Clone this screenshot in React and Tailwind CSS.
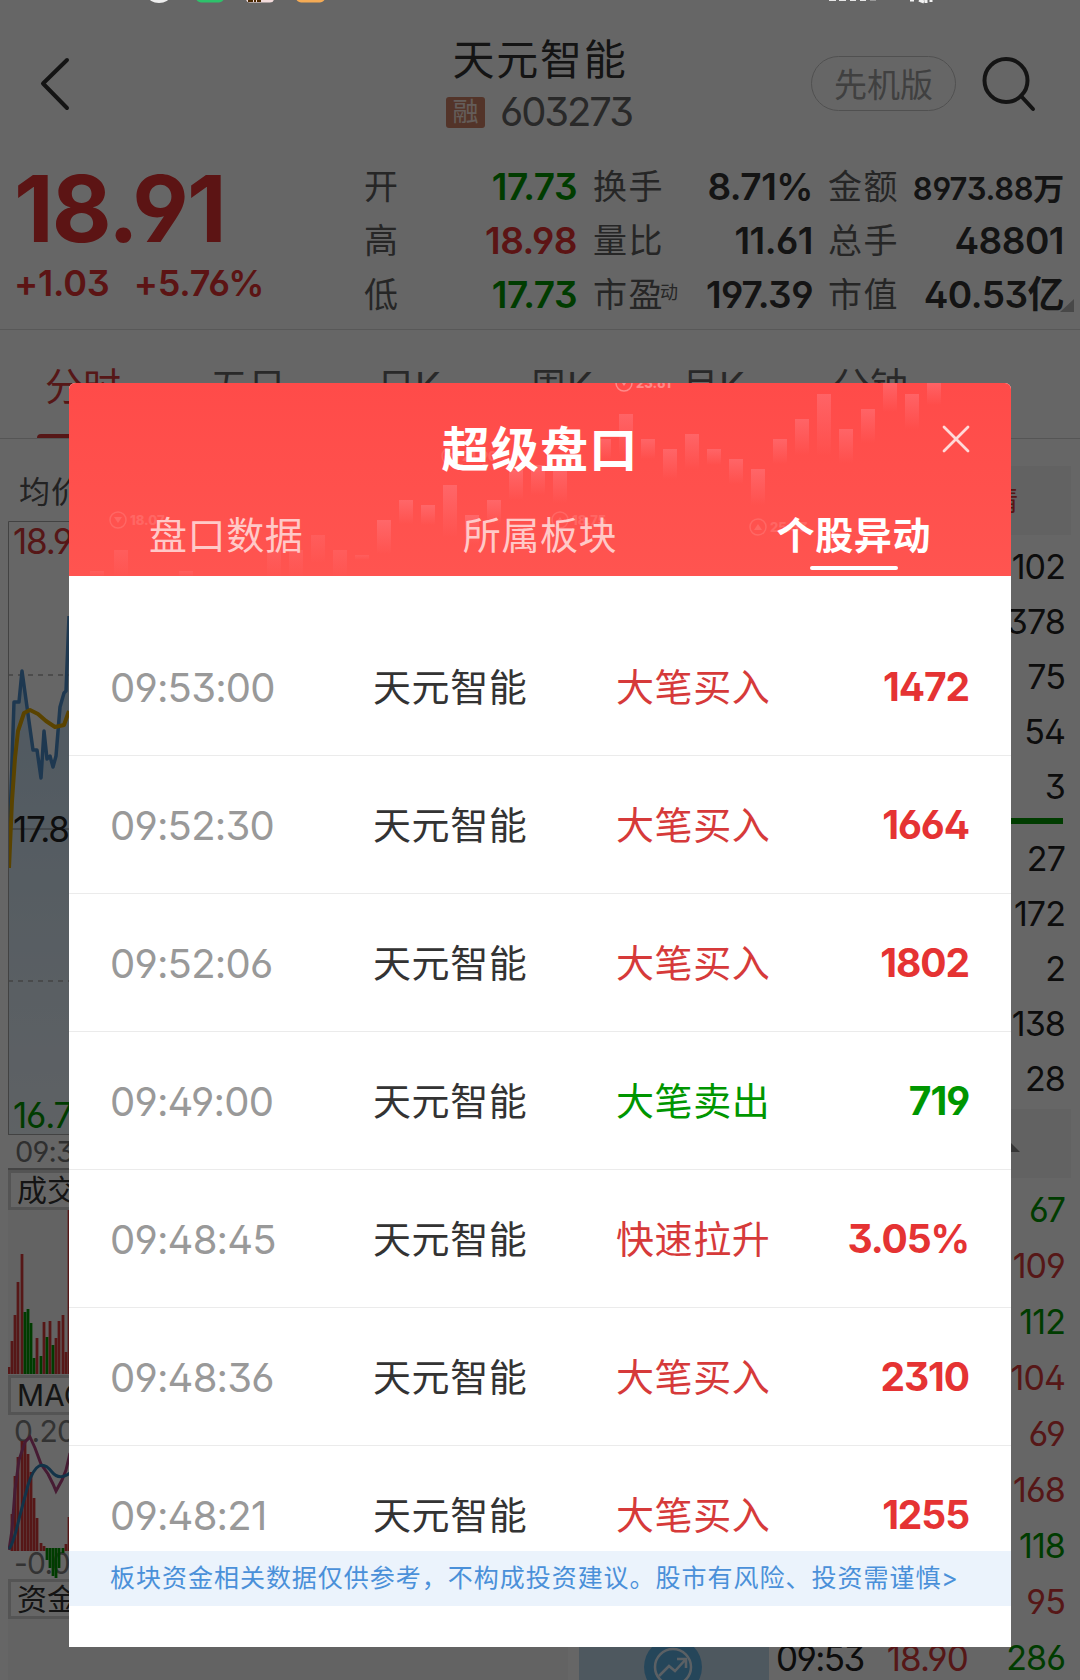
import React from 'react';

const RED = 'text-[#e53333]';
const GREEN = 'text-[#009600]';
const DARK = 'text-[#333333]';

const STATS = [
    [
        { label: '开', value: '17.73', color: GREEN },
        { label: '高', value: '18.98', color: RED },
        { label: '低', value: '17.73', color: GREEN },
    ],
    [
        { label: '换手', value: '8.71%', color: DARK },
        { label: '量比', value: '11.61', color: DARK },
        { label: '市盈', sup: '动', value: '197.39', color: DARK },
    ],
    [
        { label: '金额', value: '8973.88万', color: DARK, small: true },
        { label: '总手', value: '48801', color: DARK },
        { label: '市值', value: '40.53亿', color: DARK },
    ],
];

const STAT_COLUMNS = ['w-[213px]', 'w-[220px] ml-[16px]', 'w-[236px] ml-[15px]'];

const PERIODS = [
    { name: '分时', width: 'w-[165px]', color: 'text-[#d63a3a]' },
    { name: '五日', width: 'w-[167px]', color: 'text-[#666666]' },
    { name: '日K', width: 'w-[152px]', color: 'text-[#666666]' },
    { name: '周K', width: 'w-[152px]', color: 'text-[#666666]' },
    { name: '月K', width: 'w-[151px]', color: 'text-[#666666]' },
    { name: '分钟', width: 'w-[100px]', color: 'text-[#666666]' },
];

const SELL_ORDERS = ['102', '378', '75', '54', '3'];
const BUY_ORDERS = ['27', '172', '2', '138', '28'];

const TICKS = [
    { volume: '67', color: GREEN },
    { volume: '109', color: 'text-[#d63a3a]' },
    { volume: '112', color: GREEN },
    { volume: '104', color: 'text-[#d63a3a]' },
    { volume: '69', color: 'text-[#d63a3a]' },
    { volume: '168', color: 'text-[#d63a3a]' },
    { volume: '118', color: GREEN },
    { volume: '95', color: 'text-[#d63a3a]' },
    { volume: '286', color: GREEN, time: '09:53', price: '18.90' },
];

const MOVES = [
    { time: '09:53:00', type: '大笔买入', value: '1472', up: true },
    { time: '09:52:30', type: '大笔买入', value: '1664', up: true },
    { time: '09:52:06', type: '大笔买入', value: '1802', up: true },
    { time: '09:49:00', type: '大笔卖出', value: '719', up: false },
    { time: '09:48:45', type: '快速拉升', value: '3.05%', up: true },
    { time: '09:48:36', type: '大笔买入', value: '2310', up: true },
    { time: '09:48:21', type: '大笔买入', value: '1255', up: true },
];

// x, top, up
const VOLUME_BARS = [
    [1, 157, 1], [4, 131, 1], [7, 105, 1], [10, 72, 1], [14, 44, 1], [17, 102, 0], [20, 99, 0],
    [23, 113, 0], [26, 148, 0], [29, 128, 1], [33, 146, 0], [36, 112, 1], [39, 127, 0], [42, 111, 1],
    [45, 135, 0], [48, 128, 1], [51, 111, 1], [55, 105, 1], [58, 142, 1], [61, 0, 1],
];

// x, top, bottom, up
const MACD_BARS = [
    [4, 99, 136, 1], [7, 61, 136, 1], [10, 42, 136, 1], [14, 26, 136, 1], [17, 26, 136, 1], [20, 39, 136, 1],
    [23, 57, 136, 1], [26, 83, 136, 1], [29, 103, 136, 1], [33, 128, 136, 1], [36, 131, 136, 1],
    [39, 133, 145, 0], [42, 133, 153, 0], [45, 133, 161, 0], [48, 133, 163, 0], [51, 133, 153, 0],
    [55, 133, 138, 0], [58, 129, 136, 1], [61, 102, 136, 1],
];

// candles of the modal banner: x, y, height
const CANDLES = [
    [21, 188, 6], [45, 167, 27], [110, 188, 6], [198, 167, 27], [220, 167, 27], [242, 152, 28], [264, 167, 27],
    [286, 172, 5], [308, 137, 34], [330, 117, 24], [352, 122, 20], [374, 102, 52], [396, 132, 30],
    [418, 117, 24], [440, 87, 30], [462, 82, 30], [484, 84, 36], [528, 56, 20], [550, 31, 42], [572, 56, 20],
    [594, 66, 30], [616, 51, 35], [638, 66, 16], [660, 76, 25], [682, 86, 36], [704, 56, 25],
    [726, 36, 36], [748, 11, 62], [770, 46, 34], [792, 26, 34], [814, 0, 29], [836, 11, 35], [858, 0, 22],
];

// x, y, label, points up
const MARKERS = [
    [49, 137, '18.07', false],
    [381, 73, '21.90', false],
    [555, 0, '23.61', false],
    [491, 137, '18.75', true],
    [689, 144, '25.33', true],
];

const StatusBar = () => (
    <svg className="absolute left-0 top-0" width="1080" height="4" viewBox="0 0 1080 4">
        <ellipse cx="159" cy="-4" rx="11" ry="7" fill="#eeeeee" />
        <rect x="196" y="-10" width="28" height="12.5" rx="5" fill="#2dc26b" />
        <rect x="246" y="-10" width="28" height="12.5" rx="4" fill="#f3dcdc" />
        <path d="M248 0h5v2h-5zM254 0h2v2h-2zM257 0h4v2h-4z" fill="#4a2800" />
        <rect x="296" y="-10" width="29" height="12.5" rx="5" fill="#f5ab55" />
        <path d="M829 0h7M839 0h7M850 0h6M860 0h6" stroke="#e6e6e6" strokeWidth="2" />
        <path d="M870 0h6" stroke="#999999" strokeWidth="2" />
        <path d="M910 0h4M919 0l5 2M926 0v3M931 0v2" stroke="#f2f2f2" strokeWidth="3" />
    </svg>
);

const Header = () => (
    <div className="flex h-[150px] items-start">
        <div className="w-[360px] pl-[38px] pt-[54px]">
            <svg width="36" height="60" viewBox="0 0 36 60" fill="none" stroke="#333333" strokeWidth="4" strokeLinecap="round" strokeLinejoin="round">
                <path d="M29 6 5 29.500 29 54" />
            </svg>
        </div>
        <div className="flex w-[360px] flex-col items-center pt-[32px]">
            <div className="text-[42px] leading-[56px] tracking-[1.700px] text-[#333333]">天元智能</div>
            <div className="-ml-[2px] flex items-center gap-[15px] leading-[48px]">
                <span className="h-[31px] w-[39px] rounded-[3px] bg-[#d08266] text-center text-[26px] leading-[30px] text-[#fbe9e0]">融</span>
                <span className="text-[40px] tracking-[-2.100px] text-[#666666]">603273</span>
            </div>
        </div>
        <div className="flex flex-1 items-start pl-[91px] pt-[56px]">
            <div className="h-[55px] w-[145px] rounded-full border-[1.500px] border-[#c8c8c8] text-center text-[33px] leading-[56px] text-[#a0a0a0]">先机版</div>
            <svg className="-mt-[3px] ml-[23px]" width="64" height="64" viewBox="0 0 64 64" fill="none" stroke="#333333" strokeWidth="4" strokeLinecap="round">
                <circle cx="27" cy="27.500" r="21.500" />
                <path d="M42 43 54 56" />
            </svg>
        </div>
    </div>
);

const Quote = () => (
    <div className="flex h-[180px] border-b border-[#dcdcdc]">
        <div className="w-[364px] pl-[14px] pt-[9px] font-semibold text-[#e53333]">
            <div className="text-[92px] font-bold leading-[100px] tracking-[-1.800px]">18.91</div>
            <div className="flex gap-[24px] text-[36px] leading-[48px] tracking-[-0.200px]">
                <span>+1.03</span>
                <span>+5.76%</span>
            </div>
        </div>
        {STATS.map((column, i) => (
            <div key={i} className={`flex flex-col pt-[10px] ${STAT_COLUMNS[i]}`}>
                {column.map(item => (
                    <div key={item.label} className="flex h-[54px] items-center justify-between leading-[54px]">
                        <span className="whitespace-nowrap text-[34px] tracking-[1.500px] text-[#606060]">
                            {item.label}
                            {item.sup && <span className="ml-[-4px] align-[8px] text-[18px] leading-none">{item.sup}</span>}
                        </span>
                        {item.small ? (
                            <span className={`pt-[3px] text-[31px] font-semibold tracking-[-0.300px] ${item.color}`}>{item.value}</span>
                        ) : (
                            <span className={`text-[37px] font-semibold tracking-[-0.500px] ${item.color}`}>{item.value}</span>
                        )}
                    </div>
                ))}
            </div>
        ))}
        <svg className="-ml-[4px] mt-[149px]" width="14" height="13" viewBox="0 0 14 13">
            <path d="M14 0V13H0Z" fill="#b5b5b5" />
        </svg>
    </div>
);

const Periods = () => (
    <div className="h-[109px] border-b border-[#d4d4d4] pl-[45px]">
        <div className="flex h-[104px] pt-[28px] text-[38px] leading-[56px]">
            {PERIODS.map(period => (
                <div key={period.name} className={`${period.width} ${period.color}`}>{period.name}</div>
            ))}
        </div>
        <div className="-ml-[8px] h-[4px] w-[90px] rounded-t-md bg-[#d63a3a]" />
    </div>
);

const SectionTitle = ({ children }) => (
    <div className="h-[40px] overflow-hidden whitespace-nowrap border-[3px] border-[#d2d2d2] pl-[6px] text-[30px] leading-[34px] text-[#333333]">
        {children}
    </div>
);

const TrendChart = () => (
    <svg width="560" height="614" viewBox="0 0 560 614" fill="none">
        <defs>
            <linearGradient id="trend" x1="0" y1="0" x2="0" y2="1">
                <stop offset="0" stopColor="#c2dcf0" />
                <stop offset="1" stopColor="#ecf4fb" />
            </linearGradient>
        </defs>
        <path d="M1 330 6 181h5l3-31 11 79h4l4 28 3-47 3 28 3-3 3 11 3-11 4-49 4-14 2-2 3-75V613H1Z" fill="url(#trend)" />
        <path d="M0 308H560" stroke="#a8b4bd" strokeWidth="2" />
        <path d="M0 154H560M0 460H560" stroke="#a8a8a8" strokeWidth="1.500" strokeDasharray="5 5" />
        <path d="M1 330 6 181h5l3-31 11 79h4l4 28 3-47 3 28 3-3 3 11 3-11 4-49 4-14 2-2 3-75" stroke="#4b8cc9" strokeWidth="3.500" strokeLinejoin="round" />
        <path d="M1 347 4 280 7 237 10 210 16 192 22 189 30 193 38 200 47 206 56 204 61 190" stroke="#e0a800" strokeWidth="4" strokeLinejoin="round" />
        <path d="M.5 613.500V.5H560M0 613.500H560" stroke="#a5a5a5" strokeWidth="1" />
    </svg>
);

const Charts = () => (
    <div className="w-[568px] pl-[8px] pt-[1px]">
        <div className="pl-[11px] pt-[30px] text-[31px] leading-[44px] tracking-[1px] text-[#555555]">均价</div>
        <div className="grid pt-[7px]">
            <div className="col-start-1 row-start-1"><TrendChart /></div>
            <div className="col-start-1 row-start-1 flex flex-col justify-between pl-[5px] text-[35px] leading-[40px] tracking-[-1.200px]">
                <span className="text-[#d63a3a]">18.98</span>
                <span className="pt-[4px] text-[#222222]">17.88</span>
                <span className="pt-[2px] text-[#009600]">16.78</span>
            </div>
        </div>
        <div className="h-[35px] border-b-2 border-[#aaaaaa] pl-[7px] text-[29px] leading-[33px] tracking-[-0.800px] text-[#777777]">09:30</div>
        <SectionTitle>成交量</SectionTitle>
        <div className="h-[165px] bg-[#f8f8f8]">
            <svg width="64" height="165" viewBox="0 0 64 165">
                {VOLUME_BARS.map(([x, y, up]) => (
                    <rect key={x} x={x - 1.4} y={y} width="2.800" height={164 - y} fill={up ? '#d63a3a' : '#009600'} />
                ))}
            </svg>
        </div>
        <SectionTitle>MACD</SectionTitle>
        <div className="grid h-[164px]">
            <div className="col-start-1 row-start-1 flex flex-col justify-between pl-[6px] text-[30px] leading-[32px] tracking-[-0.700px] text-[#808080]">
                <span>0.20</span>
                <span>-0.07</span>
            </div>
            <svg className="col-start-1 row-start-1" width="64" height="164" viewBox="0 0 64 164" fill="none">
                {MACD_BARS.map(([x, y, bottom, up]) => (
                    <rect key={x} x={x - 1.4} y={y} width="2.800" height={bottom - y} fill={up ? '#d63a3a' : '#009600'} />
                ))}
                <path d="M1 135 4 115 7 75 11 45 17 27 22 22 27 33 33 49 40 59 45 69 48 76 54 65 58 55 62 38" stroke="#b0457f" strokeWidth="3" />
                <path d="M1 134Q5 130 12 100L20 70Q25 54 31 51T44 57T62 58" stroke="#2f7fb5" strokeWidth="3" />
            </svg>
        </div>
        <SectionTitle>资金流向</SectionTitle>
        <div className="h-[61px] bg-[#f8f8f8]" />
    </div>
);

const OrderBook = () => (
    <div className="flex w-[504px] flex-col pt-[27px] text-right text-[34px] tracking-[-0.900px] text-[#222222]">
        <div className="mr-[1px] h-[69px] bg-[#f4f4f4] pr-[54px] text-[28px] leading-[71px] text-[#d63a3a]">详情</div>
        <div className="pr-[7px] pt-[4px]">
            {SELL_ORDERS.map(volume => (
                <div key={volume} className="h-[55px] leading-[55px]">{volume}</div>
            ))}
        </div>
        <div className="ml-[200px] mr-[9px] mt-[4px] h-[6px] bg-[#009600]" />
        <div className="pr-[7px] pt-[7px]">
            {BUY_ORDERS.map(volume => (
                <div key={volume} className="h-[55px] leading-[55px]">{volume}</div>
            ))}
        </div>
        <div className="mr-[1px] mt-[3px] flex h-[69px] justify-end bg-[#f4f4f4] pr-[51px] pt-[31px]">
            <svg width="24" height="12" viewBox="0 0 24 12"><path d="M12 0 24 12H0Z" fill="#888888" /></svg>
        </div>
        <div className="pr-[7px] pt-[4px]">
            {TICKS.map(tick => (
                <div key={tick.volume} className="flex h-[56px] justify-end leading-[56px]">
                    {tick.time && <span className="w-[103px] text-left text-[35px] tracking-[-1.600px] text-[#222222]">{tick.time}</span>}
                    {tick.price && <span className="w-[89px] text-right text-[35px] text-[#d63a3a]">{tick.price}</span>}
                    <span className={`w-[97px] ${tick.color}`}>{tick.volume}</span>
                </div>
            ))}
        </div>
    </div>
);

const AssistantButton = () => (
    <div className="absolute bottom-0 left-[579px] h-[60px] w-[190px] bg-[#c3dbed]">
        <svg className="ml-[64px] mt-[17px]" width="60" height="60" viewBox="0 0 60 60" fill="none">
            <circle cx="30" cy="30" r="29" fill="#5eafe2" />
            <circle cx="30" cy="30" r="18" stroke="#e4f1fa" strokeWidth="2.500" />
            <path d="M16 39 26 29 32 34 43 22M34 22h9v9" stroke="#e4f1fa" strokeWidth="2.500" />
        </svg>
    </div>
);

const BannerArt = () => (
    <svg className="absolute left-0 top-0" width="942" height="193" viewBox="0 0 942 193">
        <defs>
            <linearGradient id="candle" x1="0" y1="0" x2="0" y2="1">
                <stop offset="0" stopColor="#ff9aa8" stopOpacity=".3" />
                <stop offset="1" stopColor="#ff9aa8" stopOpacity="0" />
            </linearGradient>
        </defs>
        {CANDLES.map(([x, y, height]) => (
            <rect key={x} x={x} y={y} width="14" height={height} fill="url(#candle)" opacity={x < 300 ? 0.5 : 1} />
        ))}
        {MARKERS.map(([x, y, label, up]) => (
            <g key={label} opacity={y === 0 ? 0.35 : 0.12}>
                <circle cx={x} cy={y} r="8" fill="none" stroke="#ffffff" strokeWidth="1.500" />
                <path d={up ? `M${x - 4} ${y + 3}h8l-4-6z` : `M${x - 4} ${y - 3}h8l-4 6z`} fill="#ffffff" />
                <text x={x + 12} y={y + 5} fontSize="13" fontWeight="800" fill="#ffffff">{label}</text>
            </g>
        ))}
    </svg>
);

const SuperBoard = () => (
    <div className="absolute left-[69px] top-[383px] flex h-[1264px] w-[942px] flex-col overflow-hidden rounded-t-[6px] bg-white">
        <div className="relative h-[193px] bg-gradient-to-b from-[#ff4b49] to-[#ff5450] text-white">
            <BannerArt />
            <div className="relative flex h-[114px] items-end justify-center pb-[17px]">
                <h2 className="text-[48px] font-bold leading-[60px] tracking-[1.300px]">超级盘口</h2>
                <svg className="absolute right-[39px] top-[40px]" width="32" height="32" viewBox="0 0 32 32" stroke="#ffd9d8" strokeWidth="2.800" strokeLinecap="round">
                    <path d="M4 4 28 28M28 4 4 28" />
                </svg>
            </div>
            <div className="relative flex justify-between pl-[80px] pr-[80px] pt-[10px] text-[38px] leading-[56px] tracking-[0.600px]">
                <span className="text-[#ffc9c8]">盘口数据</span>
                <span className="text-[#ffc9c8]">所属板块</span>
                <span className="flex flex-col items-center font-bold">
                    个股异动
                    <i className="mt-[3px] block h-[4px] w-[88px] rounded-full bg-white" />
                </span>
            </div>
        </div>
        <div className="flex-1 overflow-hidden pt-[42px]">
            {MOVES.map(move => (
                <div key={move.time} className="flex h-[138px] items-center border-b border-[#ebebeb] pl-[41px] pr-[42px] pt-[2px] text-[38px] tracking-[0.600px]">
                    <span className="w-[263px] text-[40px] tracking-[-0.800px] text-[#999999]">{move.time}</span>
                    <span className="w-[243px] text-[#333333]">天元智能</span>
                    <span className={move.up ? 'text-[#d63a3a]' : 'text-[#009600]'}>{move.type}</span>
                    <span className={`ml-auto text-[39px] font-bold tracking-[-1.100px] ${move.up ? 'text-[#e53333]' : 'text-[#009600]'}`}>{move.value}</span>
                </div>
            ))}
        </div>
        <div className="mb-[41px] h-[55px] whitespace-nowrap bg-[#ebf3fc] pl-[41px] text-[25px] leading-[55px] tracking-[0.980px] text-[#4a90d9]">
            板块资金相关数据仅供参考，不构成投资建议。股市有风险、投资需谨慎&gt;
        </div>
    </div>
);

const App = () => {
    return (
        <div className="relative h-[1680px] w-[1080px] overflow-hidden bg-white font-['Inter','Noto_Sans_CJK_SC',sans-serif] [font-feature-settings:'ss01','cv09']">
            <Header />
            <Quote />
            <Periods />
            <div className="flex">
                <Charts />
                <OrderBook />
            </div>
            <AssistantButton />

            {/* Backdrop */}
            <div className="absolute inset-0 bg-black/60" />
            <StatusBar />
            <SuperBoard />
        </div>
    );
};

export default App;
